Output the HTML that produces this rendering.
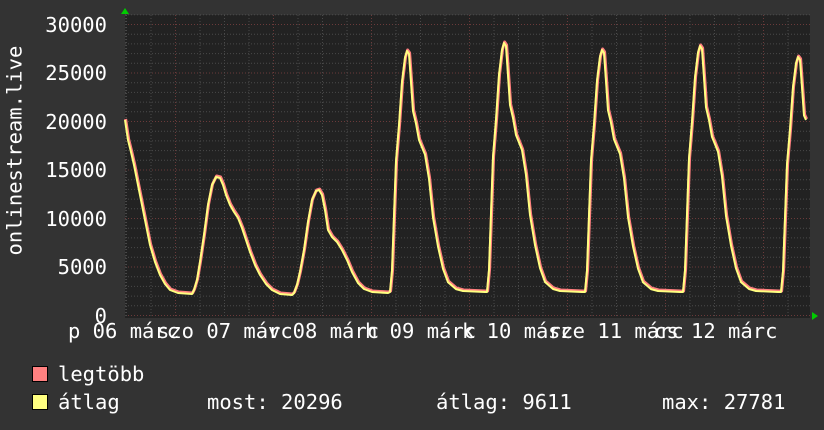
<!DOCTYPE html>
<html><head><meta charset="utf-8"><style>
html,body{margin:0;padding:0;background:#333;}
body{width:824px;height:430px;position:relative;overflow:hidden;font-family:"DejaVu Sans Mono","Liberation Mono",monospace;color:#fff;}
.t{position:absolute;font-size:20.5px;line-height:20px;white-space:pre;color:#fff;}
.yl{position:absolute;right:717px;font-size:20.5px;line-height:20px;text-align:right;}
.sq{position:absolute;width:14px;height:14px;border:1px solid #000;}
</style></head><body>
<svg id="g" width="824" height="430" style="position:absolute;left:0;top:0">
<rect x="125" y="15" width="685" height="303" fill="#222"/>
<g id="grid"></g>
<polyline id="red" fill="none" stroke="#ff7f7f" stroke-width="3" stroke-linejoin="round" transform="translate(0.6,-1)"/>
<polyline id="yel" fill="none" stroke="#ffff80" stroke-width="2" stroke-linejoin="round"/>
<polygon points="121,14 129,14 125,8" fill="#0c0"/>
<polygon points="812,312 812,320 818,316" fill="#0c0"/>
</svg>
<div class="yl" style="top:15px">30000</div>
<div class="yl" style="top:63px">25000</div>
<div class="yl" style="top:112px">20000</div>
<div class="yl" style="top:160px">15000</div>
<div class="yl" style="top:209px">10000</div>
<div class="yl" style="top:257px">5000</div>
<div class="yl" style="top:306px">0</div>
<div class="t" style="left:-78px;top:153px;width:185px;text-align:center;transform:rotate(-90deg);">onlinestream.live</div>
<div class="t" style="left:68px;top:321px">p 06 márc</div>
<div class="t" style="left:157px;top:321px">szo 07 márc</div>
<div class="t" style="left:268px;top:321px">v 08 márc</div>
<div class="t" style="left:365px;top:321px">h 09 márc</div>
<div class="t" style="left:462px;top:321px">k 10 márc</div>
<div class="t" style="left:548px;top:321px">sze 11 márc</div>
<div class="t" style="left:654px;top:321px">cs 12 márc</div>
<div class="sq" style="left:32px;top:366px;background:#ff8080"></div>
<div class="sq" style="left:32px;top:394px;background:#ffff80"></div>
<div class="t" style="left:58px;top:364px">legtöbb</div>
<div class="t" style="left:58px;top:392px">átlag</div>
<div class="t" style="left:207px;top:392px">most: 20296</div>
<div class="t" style="left:436px;top:392px">átlag: 9611</div>
<div class="t" style="left:662px;top:392px">max: 27781</div>
<script>
var ns="http://www.w3.org/2000/svg",g=document.getElementById('grid');
function ln(x1,y1,x2,y2,c){var l=document.createElementNS(ns,'line');l.setAttribute('x1',x1);l.setAttribute('y1',y1);l.setAttribute('x2',x2);l.setAttribute('y2',y2);l.setAttribute('stroke',c);l.setAttribute('stroke-width',1);l.setAttribute('stroke-dasharray','1,2');g.appendChild(l);}
for(var i=0;i<=31;i++){var y=315.5-i*9.7;ln(125,y,810,y,i%5==0?'#6a3a3a':'#4a4a4a');}
for(var x=175.5-24.5*2;x<810;x+=24.5){var k=Math.round((x-175.5)/24.5);ln(x,15,x,318,(k%4==0)?'#6a3a3a':'#4a4a4a');}
ln(125.5,15,125.5,318,'#444');
var pts=[[125,120],[128,140],[131,152],[134,165],[138,185],[142,205],[146,225],[150,245],[155,262],[160,275],[165,284],[170,290],[178,293],[192,294],
[194,290],[197,280],[200,262],[204,235],[208,205],[212,185],[216,177],[220,178],[223,185],[226,195],[230,205],[234,212],[238,218],[242,228],[246,240],[250,252],[255,265],[260,275],[266,284],[272,290],[280,294],[292,295],
[294,293],[297,285],[300,272],[304,250],[308,222],[312,200],[316,191],[319,190],[322,195],[325,210],[328,230],[332,237],[337,242],[342,250],[347,260],[352,272],[358,283],[364,289],[372,292],[388,293]];
var pat=[[-17,292],[-15,270],[-11,157],[-8,120],[-5,75],[-2,50],[0,43],[2,46],[4,75],[6,105],[9,118],[12,135],[14,140],[18,150],[22,175],[26,215],[31,245],[36,268],[41,282],[49,289],[56,291],[78,292]];
var peaks=[[407,51],[504,43],[602,50],[700,46],[798,57]];
peaks.forEach(function(p){var s=(292-p[1])/(292-43);pat.forEach(function(q){var x=p[0]+q[0];if(x>806)return;pts.push([x,292-(292-q[1])*s]);});});
pts.push([806,120]);
var str=pts.map(function(p){return p[0]+','+p[1].toFixed(1)}).join(' ');
document.getElementById('red').setAttribute('points',str);
document.getElementById('yel').setAttribute('points',str);
</script>
</body></html>
